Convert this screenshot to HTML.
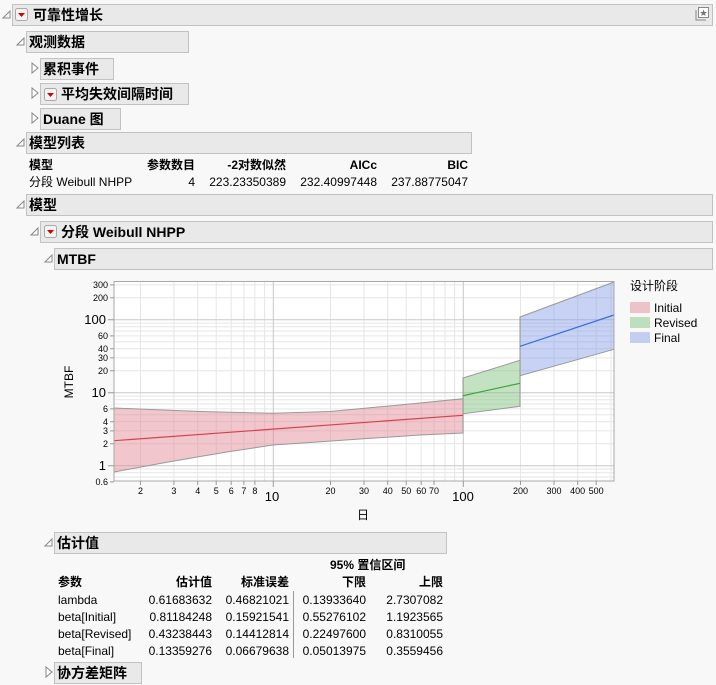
<!DOCTYPE html>
<html><head><meta charset="utf-8"><style>
*{margin:0;padding:0;box-sizing:border-box}
body{width:716px;height:685px;background:#f8f8f8;font-family:"Liberation Sans","Noto Sans CJK SC",sans-serif;position:relative;overflow:hidden;color:#000}
.h{position:absolute;height:22px;background:#e9e9e9;border:1px solid #c2c2c2;font-weight:bold;font-size:14px;line-height:20px;padding-left:2px;white-space:nowrap}
.t{position:absolute;font-size:12px;white-space:nowrap;line-height:14px}
.r{text-align:right}
.b{font-weight:bold}
svg{position:absolute;left:0;top:0}
</style></head><body>
<svg width="716" height="685" font-family="Liberation Sans, Noto Sans CJK SC, sans-serif">
<defs>
<g id="op"><path d="M0 7 L7 0 L7 7 Z" fill="#fff" stroke="#888" stroke-width="1"/></g>
<g id="cl"><path d="M0 0 L6 5 L0 10 Z" fill="#fff" stroke="#888" stroke-width="1"/></g>
<g id="rm"><rect x="0.5" y="0.5" width="12" height="12" rx="2" fill="#f4f4f4" stroke="#aaa"/><path d="M3 5 L10 5 L6.5 9 Z" fill="#d00"/></g>
</defs>
</svg>
<div class="h" style="left:12px;top:4px;width:701px;padding-left:20px">可靠性增长</div>
<div class="h" style="left:26px;top:31px;width:163px">观测数据</div>
<div class="h" style="left:40px;top:58px;width:74px">累积事件</div>
<div class="h" style="left:40px;top:83px;width:149px;padding-left:20px">平均失效间隔时间</div>
<div class="h" style="left:40px;top:108px;width:81px">Duane 图</div>
<div class="h" style="left:26px;top:132px;width:446px">模型列表</div>
<div class="h" style="left:26px;top:194px;width:687px">模型</div>
<div class="h" style="left:40px;top:221px;width:673px;padding-left:20px">分段 Weibull NHPP</div>
<div class="h" style="left:54px;top:248px;width:659px">MTBF</div>
<div class="h" style="left:54px;top:532px;width:393px">估计值</div>
<div class="h" style="left:54px;top:662px;width:88px">协方差矩阵</div>

<svg width="716" height="685" font-family="Liberation Sans, Noto Sans CJK SC, sans-serif">
<use href="#op" x="3" y="11"/>
<use href="#rm" x="15" y="8"/>
<use href="#op" x="17" y="38"/>
<use href="#cl" x="32" y="63"/>
<use href="#cl" x="32" y="88"/>
<use href="#rm" x="44" y="88"/>
<use href="#cl" x="32" y="113"/>
<use href="#op" x="17" y="139"/>
<use href="#op" x="17" y="201"/>
<use href="#op" x="31" y="228"/>
<use href="#rm" x="44" y="225"/>
<use href="#op" x="45" y="255"/>
<use href="#op" x="45" y="539"/>
<use href="#cl" x="46" y="667"/>
<g transform="translate(695,7)"><rect x="3.5" y="0.5" width="10" height="10" fill="#fff" stroke="#888"/><path d="M1 3 V13 H11" fill="none" stroke="#888"/><path d="M8.5 2.5 L9.5 5 L12 5 L10 6.6 L10.8 9 L8.5 7.6 L6.2 9 L7 6.6 L5 5 L7.5 5 Z" fill="#777"/></g>

<!-- plot -->
<rect x="114" y="281.5" width="500" height="199.5" fill="#fff"/>
<g stroke="#e6e6e6" stroke-width="1">
<path d="M140.5 282V481M173.9 282V481M197.7 282V481M216.2 282V481M231.2 282V481M243.9 282V481M254.9 282V481M264.6 282V481M330.5 282V481M364 282V481M387.7 282V481M406.2 282V481M421.2 282V481M434 282V481M445 282V481M454.6 282V481M520.5 282V481M554 282V481M577.7 282V481M596.2 282V481M611 282V481"/>
<path d="M114 284.9H614M114 297.7H614M114 323.1H614M114 326.8H614M114 331H614M114 335.9H614M114 341.7H614M114 348.8H614M114 357.9H614M114 370.7H614M114 396.1H614M114 399.8H614M114 404H614M114 408.9H614M114 414.7H614M114 421.8H614M114 430.9H614M114 443.7H614M114 469H614M114 472.8H614M114 477H614"/>
</g>
<g stroke="#c8c8c8" stroke-width="1"><path d="M273.3 282V481M463.3 282V481M114 319.7H614M114 392.7H614M114 465.7H614"/></g>
<path d="M114 408 L200 411.5 L273 413.3 L330 411.5 L400 405 L463 398.7 L463 433 L420 435 L360 439 L310 442.5 L273 445 L230 451.5 L197 457 L160 463.5 L114 472 Z" fill="rgba(225,130,145,0.45)" stroke="#999" stroke-width="1"/>
<path d="M114 440.7 L463 415.3" stroke="#d9404f" stroke-width="1.2"/>
<path d="M463 378 L520 360.3 L520 406.3 L463 413.7 Z" fill="rgba(120,190,120,0.45)" stroke="#999"/>
<path d="M463 395.7 L520 383.3" stroke="#3aa040" stroke-width="1.2"/>
<path d="M520 317 L614 282 L614 349.3 L520 375.7 Z" fill="rgba(130,155,230,0.45)" stroke="#999"/>
<path d="M520 346.3 L614 315" stroke="#3a6ee0" stroke-width="1.2"/>
<rect x="114" y="281.5" width="500" height="199.5" fill="none" stroke="#a8a8a8"/>
<g stroke="#999"><path d="M110 284.9H114M110 297.7H114M108 319.7H114M110 335.9H114M110 348.8H114M110 357.9H114M110 370.7H114M108 392.7H114M110 408.9H114M110 421.8H114M110 430.9H114M110 443.7H114M108 465.7H114M110 481.9H114"/>
<path d="M140.5 481V485M173.9 481V485M197.7 481V485M216.2 481V485M231.2 481V485M243.9 481V485M254.9 481V485M273.3 481V487M330.5 481V485M364 481V485M387.7 481V485M406.2 481V485M421.2 481V485M434 481V485M463.3 481V487M520.5 481V485M554 481V485M577.7 481V485M596.2 481V485"/></g>
<g font-size="9" text-anchor="end" fill="#000">
<text x="108" y="288">300</text><text x="108" y="301">200</text><text x="108" y="339">60</text><text x="108" y="352">40</text><text x="108" y="361">30</text><text x="108" y="374">20</text><text x="108" y="412">6</text><text x="108" y="425">4</text><text x="108" y="434">3</text><text x="108" y="447">2</text><text x="108" y="485">0.6</text>
</g>
<g font-size="13" text-anchor="end"><text x="106" y="324">100</text><text x="106" y="397">10</text><text x="106" y="470">1</text></g>
<g font-size="9" text-anchor="middle">
<text x="140.5" y="494">2</text><text x="173.9" y="494">3</text><text x="197.7" y="494">4</text><text x="216.2" y="494">5</text><text x="231.2" y="494">6</text><text x="243.9" y="494">7</text><text x="254.9" y="494">8</text><text x="330.5" y="494">20</text><text x="364" y="494">30</text><text x="387.7" y="494">40</text><text x="406.2" y="494">50</text><text x="421.2" y="494">60</text><text x="434" y="494">70</text><text x="520.5" y="494">200</text><text x="554" y="494">300</text><text x="577.7" y="494">400</text><text x="596.2" y="494">500</text>
</g>
<g font-size="13" text-anchor="middle"><text x="272" y="501">10</text><text x="463" y="501">100</text></g>
<text x="363" y="519" font-size="12" text-anchor="middle">日</text>
<text transform="translate(73,382) rotate(-90)" font-size="12" text-anchor="middle">MTBF</text>
<text x="630" y="290" font-size="12">设计阶段</text>
<rect x="630" y="302" width="20" height="11" fill="rgba(225,130,145,0.45)"/><text x="654" y="312" font-size="12">Initial</text>
<rect x="630" y="317" width="20" height="11" fill="rgba(120,190,120,0.45)"/><text x="654" y="327" font-size="12">Revised</text>
<rect x="630" y="332" width="20" height="11" fill="rgba(130,155,230,0.45)"/><text x="654" y="342" font-size="12">Final</text>
<path d="M293.5 591V658" stroke="#999"/>
</svg>

<!-- model list table -->
<div class="t b" style="left:29px;top:158px">模型</div>
<div class="t b r" style="left:130px;top:158px;width:65px">参数数目</div>
<div class="t b r" style="left:200px;top:158px;width:86px">-2对数似然</div>
<div class="t b r" style="left:290px;top:158px;width:87px">AICc</div>
<div class="t b r" style="left:380px;top:158px;width:88px">BIC</div>
<div class="t" style="left:29px;top:175px">分段 Weibull NHPP</div>
<div class="t r" style="left:130px;top:175px;width:65px">4</div>
<div class="t r" style="left:200px;top:175px;width:86px">223.23350389</div>
<div class="t r" style="left:290px;top:175px;width:87px">232.40997448</div>
<div class="t r" style="left:380px;top:175px;width:88px">237.88775047</div>

<!-- estimates -->
<div class="t b" style="left:330px;top:558px">95% 置信区间</div>
<div class="t b" style="left:58px;top:575px">参数</div>
<div class="t b r" style="left:140px;top:575px;width:72px">估计值</div>
<div class="t b r" style="left:215px;top:575px;width:74px">标准误差</div>
<div class="t b r" style="left:295px;top:575px;width:71px">下限</div>
<div class="t b r" style="left:370px;top:575px;width:73px">上限</div>
<div class="t" style="left:58px;top:592px;line-height:17px">lambda<br>beta[Initial]<br>beta[Revised]<br>beta[Final]</div>
<div class="t r" style="left:140px;top:592px;width:72px;line-height:17px">0.61683632<br>0.81184248<br>0.43238443<br>0.13359276</div>
<div class="t r" style="left:215px;top:592px;width:74px;line-height:17px">0.46821021<br>0.15921541<br>0.14412814<br>0.06679638</div>
<div class="t r" style="left:295px;top:592px;width:71px;line-height:17px">0.13933640<br>0.55276102<br>0.22497600<br>0.05013975</div>
<div class="t r" style="left:370px;top:592px;width:73px;line-height:17px">2.7307082<br>1.1923565<br>0.8310055<br>0.3559456</div>
</body></html>
